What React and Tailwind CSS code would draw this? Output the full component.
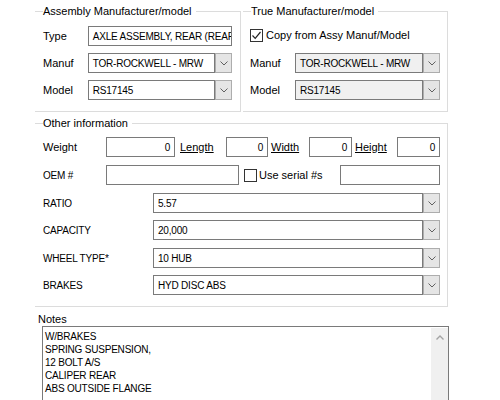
import React from "react"

const line = "bg-[#dcdcdc]"
const caps = "text-[10px] tracking-[-0.2px]"

function Group({ title, className = "", children }) {
  return (
    <div className={className}>
      <div className="flex h-[12px] items-start">
        <div className={`mt-[6px] h-px w-[8px] ${line}`} />
        <span className="leading-[12px] whitespace-nowrap">{title}</span>
        <div className="mt-[6px] ml-[4px] h-[6px] flex-1 border-t border-r border-[#dcdcdc]" />
      </div>
      <div className="border-r border-b border-[#dcdcdc]">{children}</div>
    </div>
  )
}

function Chevron({ color = "#606060" }) {
  return (
    <svg width="8" height="5" viewBox="0 0 8 5">
      <path d="M0.5 0.5 L4 4 L7.5 0.5" fill="none" stroke={color} strokeWidth="1" />
    </svg>
  )
}

function Combo({ value, className = "", disabled = false }) {
  return (
    <div className={`flex h-[20px] ${className}`}>
      <div
        className={`flex flex-1 items-center overflow-hidden whitespace-nowrap border border-[#7a7a7a] pl-[4px] ${caps} ${
          disabled ? "bg-[#f0f0f0]" : "bg-white"
        }`}
      >
        {value}
      </div>
      <div className="flex w-[17px] items-center justify-center border border-[#adadad] bg-[#e5e5e5]">
        <Chevron />
      </div>
    </div>
  )
}

function Field({ value = "", right = false, className = "" }) {
  return (
    <div
      className={`flex h-[20px] items-center overflow-hidden whitespace-nowrap border border-[#7a7a7a] bg-white ${caps} ${
        right ? "justify-end pr-[4px]" : "pl-[4px]"
      } ${className}`}
    >
      {value}
    </div>
  )
}

function Check({ checked }) {
  return (
    <div className="flex h-[13px] w-[13px] shrink-0 items-center justify-center border border-[#333333] bg-white">
      {checked && (
        <svg width="11" height="11" viewBox="0 0 11 11">
          <path d="M1.5 5.5 L4.2 8.3 L9.5 2" fill="none" stroke="#222" strokeWidth="1.2" />
        </svg>
      )}
    </div>
  )
}

const attrs = [
  ["RATIO", "5.57", "mt-[8px]"],
  ["CAPACITY", "20,000", "mt-[7px]"],
  ["WHEEL TYPE*", "10 HUB", "mt-[8px]"],
  ["BRAKES", "HYD DISC ABS", "mt-[7px]"],
]

const notes = ["W/BRAKES", "SPRING SUSPENSION,", "12 BOLT A/S", "CALIPER REAR", "ABS OUTSIDE FLANGE", ""]

export default function App() {
  return (
    <div className="h-[400px] w-[500px] overflow-hidden bg-white pl-[35px] pt-[5px] font-['Liberation_Sans',Arial,sans-serif] text-[11px] text-black">
      <div className="flex w-[413px] gap-[2px]">
        <Group title="Assembly Manufacturer/model" className="w-[206px]">
          <div className="pt-[10px] pb-[11px] pl-[8px] pr-[8px]">
            <div className="flex h-[18px] items-center">
              <span className="w-[45px]">Type</span>
              <Field value="AXLE ASSEMBLY, REAR (REAR)" className="h-[18px] w-[145px]" />
            </div>
            <div className="mt-[8px] flex items-center">
              <span className="w-[45px]">Manuf</span>
              <Combo value="TOR-ROCKWELL - MRW" className="w-[145px]" />
            </div>
            <div className="mt-[7px] flex items-center">
              <span className="w-[45px]">Model</span>
              <Combo value="RS17145" className="w-[145px]" />
            </div>
          </div>
        </Group>
        <Group title="True Manufacturer/model" className="w-[205px]">
          <div className="pt-[12px] pb-[11px] pl-[7px] pr-[7px]">
            <div className="flex h-[13px] items-center gap-[3px]">
              <Check checked />
              <span>Copy from Assy Manuf/Model</span>
            </div>
            <div className="mt-[11px] flex items-center">
              <span className="w-[45px]">Manuf</span>
              <Combo value="TOR-ROCKWELL - MRW" className="w-[145px]" disabled />
            </div>
            <div className="mt-[7px] flex items-center">
              <span className="w-[45px]">Model</span>
              <Combo value="RS17145" className="w-[145px]" disabled />
            </div>
          </div>
        </Group>
      </div>

      <Group title="Other information" className="mt-[5px] w-[413px]">
        <div className="pt-[8px] pb-[11px] pl-[8px]">
          <div className="flex items-center">
            <span className="w-[63px]">Weight</span>
            <Field value="0" right className="w-[69px]" />
            <span className="w-[51px] pl-[5px] underline">Length</span>
            <Field value="0" right className="w-[42px]" />
            <span className="w-[41px] pl-[3px] underline">Width</span>
            <Field value="0" right className="w-[43px]" />
            <span className="w-[45px] pl-[3px] underline">Height</span>
            <Field value="0" right className="w-[43px]" />
          </div>
          <div className="mt-[8px] flex items-center">
            <span className={`w-[63px] ${caps}`}>OEM #</span>
            <Field className="w-[133px]" />
            <div className="flex w-[101px] items-center gap-[2px] pl-[5px]">
              <Check />
              <span>Use serial #s</span>
            </div>
            <Field className="w-[100px]" />
          </div>
          {attrs.map(([label, value, mt]) => (
            <div key={label} className={`${mt} flex items-center`}>
              <span className={`w-[110px] ${caps}`}>{label}</span>
              <Combo value={value} className="w-[287px]" />
            </div>
          ))}
        </div>
      </Group>

      <div className="mt-[6px] ml-[3px] h-[13px] leading-[13px]">Notes</div>
      <div className="ml-[7px] flex h-[80px] w-[407px] border border-[#7a7a7a] border-b-0 bg-white">
        <div className={`flex-1 pt-[3px] pl-[2px] leading-[13px] ${caps}`}>
          {notes.map((n, i) => (
            <div key={i} className="h-[13px] whitespace-nowrap">
              {n}
            </div>
          ))}
        </div>
        <div className="mt-[1px] flex w-[17px] justify-center bg-[#f0f0f0] pt-[7px]">
          <svg width="8" height="5" viewBox="0 0 8 5">
            <path d="M0.5 4.5 L4 1 L7.5 4.5" fill="none" stroke="#a3a3a3" strokeWidth="1.4" />
          </svg>
        </div>
      </div>
    </div>
  )
}
